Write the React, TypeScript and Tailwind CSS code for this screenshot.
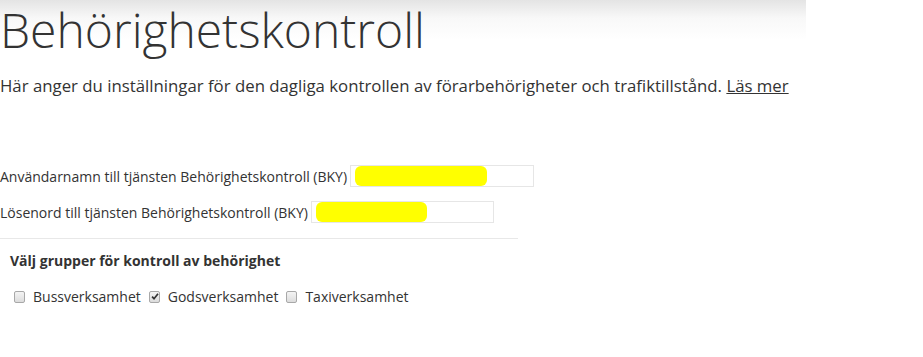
import React from "react";

function Box({ checked }: { checked?: boolean }) {
  return (
    <span className="relative inline-block w-[11px] h-[12px] rounded-[2px] border border-[#a8a8a8] bg-gradient-to-b from-[#f4f4f4] to-[#dcdcdc] shrink-0">
      {checked && (
        <svg viewBox="0 0 12 12" className="absolute left-[0px] top-[-1px] w-[10px] h-[11px]">
          <path d="M2.5 6.2 L4.8 8.6 L9.6 2.6" fill="none" stroke="#333" strokeWidth="2" />
        </svg>
      )}
    </span>
  );
}

export default function App() {
  return (
    <div className="w-[923px] h-[357px] bg-white text-[#333] overflow-hidden" style={{ fontFamily: '"Open Sans", sans-serif' }}>
      <div className="w-[806px] pt-[2px] bg-[linear-gradient(to_bottom,#e4e4e4,#f8f8f8_18px,#ffffff_40px)]">
        <h1 className="text-[48px] leading-[56px] font-light text-[#333] whitespace-nowrap">Behörighetskontroll</h1>
      </div>
      <p className="mt-[16px] text-[16.8px] leading-[24px] whitespace-nowrap">
        Här anger du inställningar för den dagliga kontrollen av förarbehörigheter och trafiktillstånd.{" "}
        <span className="underline">Läs mer</span>
      </p>
      <div className="mt-[67px] flex flex-col gap-[14px] text-[14px]">
        <div className="flex items-center gap-[3px] h-[22px]">
          <span className="whitespace-nowrap">Användarnamn till tjänsten Behörighetskontroll (BKY)</span>
          <div className="w-[184px] h-[22px] border border-[#e6e6e6] flex items-center pl-[4px]">
            <div className="w-[132px] h-[20px] bg-[#ffff00] rounded-[6px]" />
          </div>
        </div>
        <div className="flex items-center gap-[3px] h-[22px]">
          <span className="whitespace-nowrap">Lösenord till tjänsten Behörighetskontroll (BKY)</span>
          <div className="w-[183px] h-[22px] border border-[#e6e6e6] flex items-center pl-[4px]">
            <div className="w-[111px] h-[20px] bg-[#ffff00] rounded-[6px]" />
          </div>
        </div>
      </div>
      <div className="mt-[15px] w-[518px] border-t border-[#e8e8e8] pl-[10px] pt-[12px]">
        <div className="text-[14px] font-bold leading-[20px] text-[#333]">Välj grupper för kontroll av behörighet</div>
        <div className="mt-[15px] flex items-center text-[14px] pl-[4px]">
          <Box />
          <span className="ml-[8px] mr-[8px]">Bussverksamhet</span>
          <Box checked />
          <span className="ml-[8px] mr-[8px]">Godsverksamhet</span>
          <Box />
          <span className="ml-[8px]">Taxiverksamhet</span>
        </div>
      </div>
    </div>
  );
}
